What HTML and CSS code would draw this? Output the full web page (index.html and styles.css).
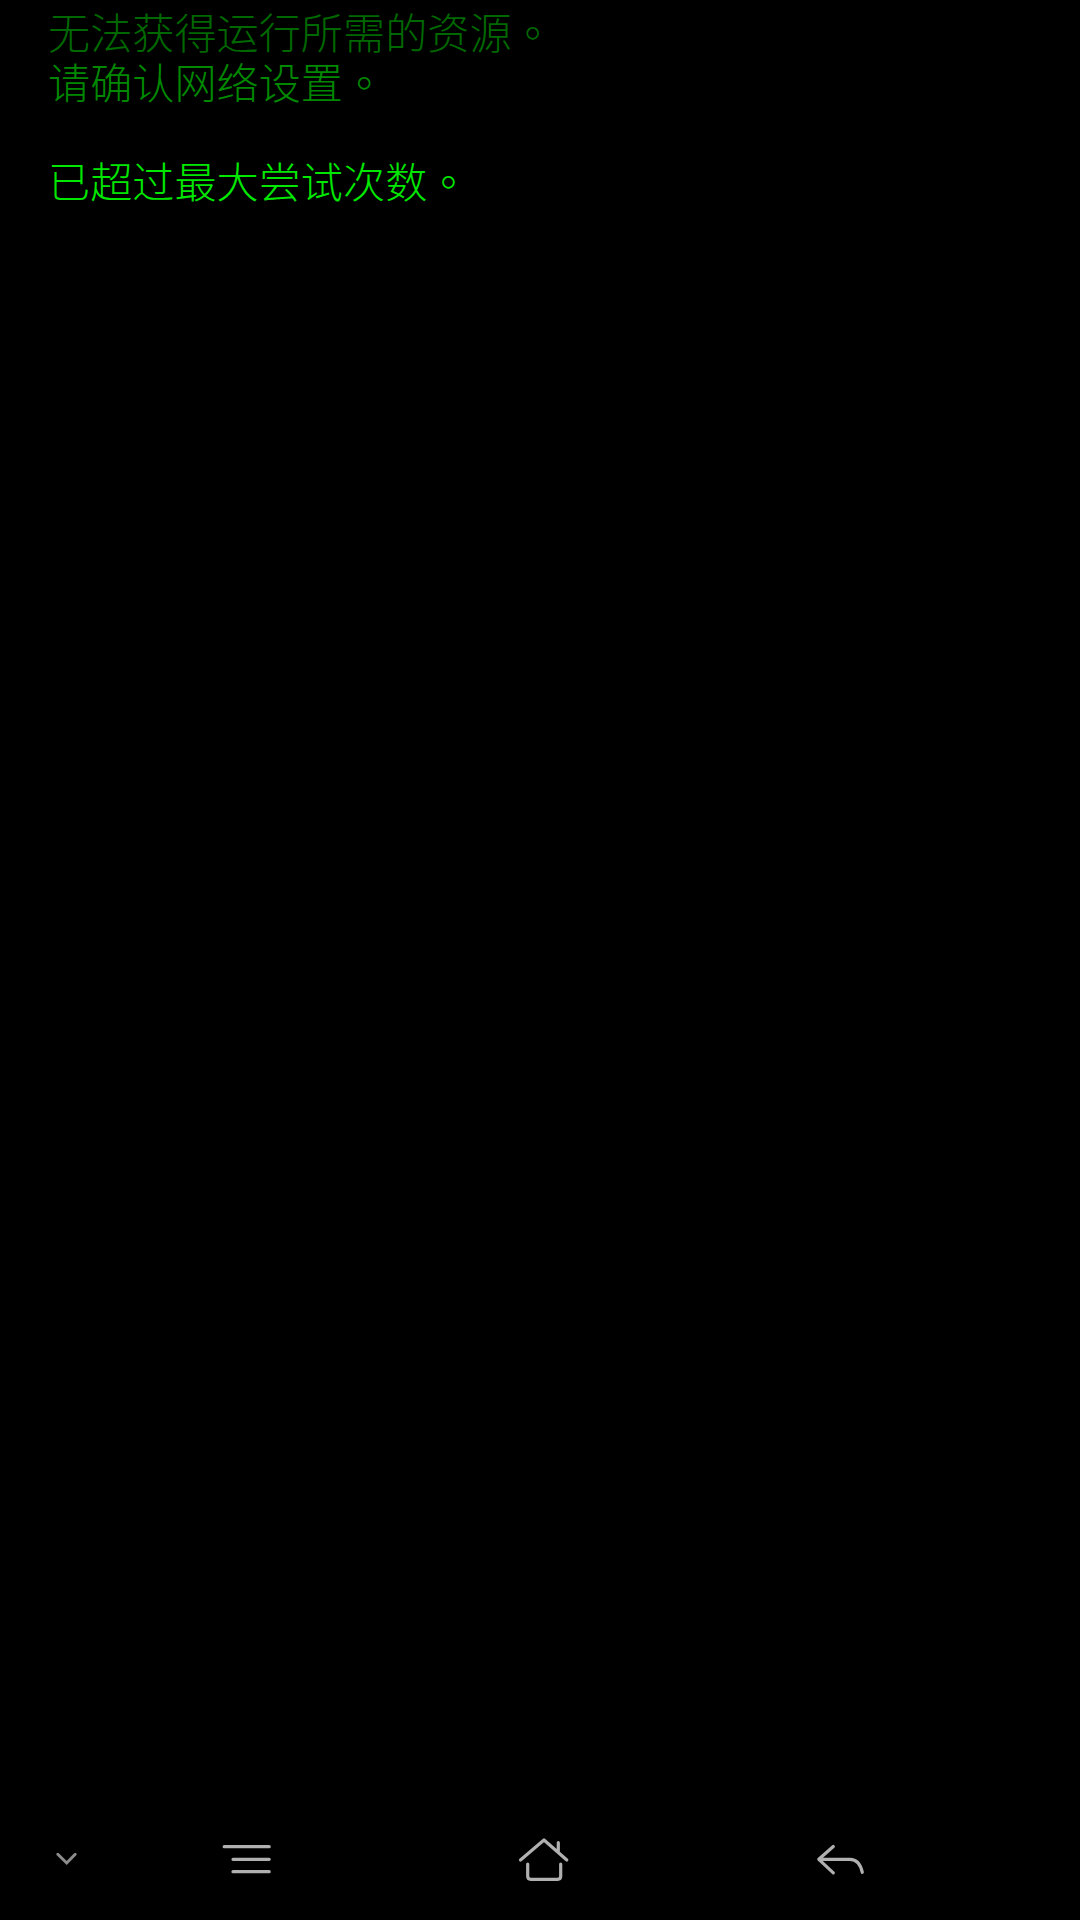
FILE: index.html
```html
<!DOCTYPE html>
<html lang="zh-CN">
<head>
<meta charset="utf-8">
<title>无法获得运行所需的资源</title>
<link rel="stylesheet" href="styles.css">
</head>
<body>
<main class="screen">
  <section class="log">
    <p class="line dim">无法获得运行所需的资源<span class="stop" lang="zh-TW">。</span></p>
    <p class="line mid">请确认网络设置<span class="stop" lang="zh-TW">。</span></p>
    <p class="line blank">&nbsp;</p>
    <p class="line bright">已超过最大尝试次数<span class="stop" lang="zh-TW">。</span></p>
  </section>
  <nav class="nav">
    <div class="slot first">
      <svg class="icon small" viewBox="0 0 30 30" fill="none"><path d="M5.8 10.3 14.7 19 23.2 10.3" class="chev"/></svg>
    </div>
    <div class="slot">
      <svg class="icon" viewBox="0 0 61 60" fill="none"><path d="M8.2 17.7H53.2M17 30.3H53.2M17 42.7H53.2" class="stroke"/></svg>
    </div>
    <div class="slot">
      <svg class="icon" viewBox="0 0 61 60" fill="none"><path d="M7.5 31 31 11 53.8 31M45.3 13.7V22.7M14.7 35V47.3Q14.7 50.3 17.7 50.3H44.7Q47.7 50.3 47.7 47.3V35" class="stroke"/></svg>
    </div>
    <div class="slot">
      <svg class="icon" viewBox="0 0 61 60" fill="none"><path d="M23.3 17.5 8.8 30.3 23.3 43.8M8.8 30.3H40C46 30.3 50.5 35 52.3 43.3" class="stroke"/></svg>
    </div>
  </nav>
</main>
</body>
</html>
```
FILE: styles.css
```css
html, body {
  margin: 0;
  padding: 0;
  background: #000;
}
.screen {
  width: 1080px;
  height: 1920px;
  display: flex;
  flex-direction: column;
  justify-content: space-between;
  background: #000;
  overflow: hidden;
}
.log {
  padding: 6px 0 0 48px;
  font-family: "Noto Sans CJK SC", "Noto Sans CJK TC", sans-serif;
  font-size: 42.15px;
  font-weight: 300;
  line-height: 49.5px;
}
.line {
  margin: 0;
  white-space: nowrap;
}
.stop {
  font-family: "Noto Sans CJK TC", sans-serif;
}
.dim { color: #006800; }
.mid { color: #008800; }
.bright { color: #00e800; }
.nav {
  display: flex;
  align-items: center;
  height: 100px;
  margin-bottom: 11px;
  padding-left: 36px;
}
.slot {
  width: 297px;
  display: flex;
  justify-content: center;
  align-items: center;
}
.slot.first {
  width: 62px;
}
.icon {
  width: 61px;
  height: 60px;
  display: block;
}
.icon.small {
  width: 30px;
  height: 30px;
}
.stroke {
  stroke: #b0b0b0;
  stroke-width: 3.2;
  stroke-linecap: round;
  stroke-linejoin: round;
}
.chev {
  stroke: #8c8c8c;
  stroke-width: 3;
  stroke-linecap: round;
  stroke-linejoin: miter;
}
```
